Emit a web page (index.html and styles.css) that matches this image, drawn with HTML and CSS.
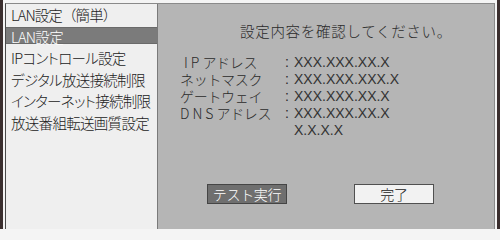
FILE: index.html
```html
<!DOCTYPE html>
<html lang="ja">
<head>
<meta charset="utf-8">
<title>LAN設定</title>
<link rel="stylesheet" href="styles.css">
</head>
<body>
<div class="frame">
  <div class="screen">
    <ul class="sidebar">
      <li class="item item-title">LAN設定（簡単）</li>
      <li class="item item-active">LAN設定</li>
      <li class="item item-first">IPコントロール設定</li>
      <li class="item">デジタル放送接続制限</li>
      <li class="item">インターネット接続制限</li>
      <li class="item">放送番組転送画質設定</li>
    </ul>
    <div class="main">
      <p class="heading">設定内容を確認してください。</p>
      <div class="info">
        <div class="label label-ip"><span class="latin">IP</span>アドレス</div><div class="colon">:</div><div class="value">XXX.XXX.XX.X</div>
        <div class="label">ネットマスク</div><div class="colon">:</div><div class="value">XXX.XXX.XXX.X</div>
        <div class="label">ゲートウェイ</div><div class="colon">:</div><div class="value">XXX.XXX.XX.X</div>
        <div class="label"><span class="latin">DNS</span>アドレス</div><div class="colon">:</div><div class="value">XXX.XXX.XX.X</div>
        <div class="label"></div><div class="colon"></div><div class="value">X.X.X.X</div>
      </div>
      <div class="actions">
        <button class="btn btn-test">テスト実行</button>
        <button class="btn btn-done">完了</button>
      </div>
    </div>
  </div>
</div>
</body>
</html>
```

FILE: styles.css
```css
* { box-sizing: border-box; }

html, body {
  margin: 0;
  padding: 0;
  background: #f4f4f4;
}

body {
  width: 500px;
  height: 229px;
  overflow: hidden;
  font-family: "Noto Sans CJK JP", "Noto Sans", sans-serif;
  color: #2a2a2a;
}

.frame {
  display: flex;
  height: 229px;
  padding: 3px 2px 0 2px;
  border-left: 3px solid #3b2f2f;
  border-right: 3px solid #3b2f2f;
  background: #f4f4f4;
}

.screen {
  flex: 1;
  display: flex;
  border-left: 1px solid #4a4a4a;
  border-top: 1px solid #8a8a8a;
  border-right: 1px solid #8a8a8a;
}

.sidebar {
  list-style: none;
  margin: 0;
  padding: 0;
  width: 152px;
  flex: none;
  background: #efefef;
  border-right: 1px solid #7a7a7a;
}

.item {
  height: 21.5px;
  line-height: 21.5px;
  padding-left: 5px;
  font-size: 14.5px;
  font-weight: 300;
  letter-spacing: -0.7px;
  font-feature-settings: "palt";
  white-space: nowrap;
  color: #222222;
}

.item-title {
  height: 22px;
  line-height: 22px;
  font-feature-settings: normal;
  letter-spacing: -0.9px;
}

.item-active {
  height: 17px;
  line-height: 17px;
  margin-top: 1px;
  background: #7b7b7b;
  color: #ffffff;
  border-top: 1px solid #6a6a6a;
  border-bottom: 1px solid #6a6a6a;
}

.item-first {
  margin-top: 3px;
}

.main {
  flex: 1;
  background: #b5b5b5;
  padding-top: 17px;
}

.heading {
  margin: 0 0 13px 82px;
  height: 20px;
  line-height: 20px;
  font-size: 14.5px;
  font-weight: 300;
  letter-spacing: 0.7px;
  white-space: nowrap;
}

.info {
  display: grid;
  grid-template-columns: 105px 9px auto;
  grid-auto-rows: 17px;
  margin-left: 22px;
  font-size: 14px;
  font-weight: 300;
}

.label,
.colon,
.value {
  height: 17px;
  line-height: 17px;
  white-space: nowrap;
}

.label {
  letter-spacing: -0.3px;
}

.label-ip {
  padding-left: 4px;
}

.latin {
  letter-spacing: 3px;
}

.colon {
  font-family: "Liberation Sans", sans-serif;
}

.value {
  font-family: "Liberation Sans", sans-serif;
  color: #333333;
}

.actions {
  display: flex;
  gap: 67px;
  margin: 45px 0 0 49px;
}

.btn {
  width: 80px;
  height: 20px;
  padding: 0;
  font-family: "Noto Sans CJK JP", "Noto Sans", sans-serif;
  font-size: 14px;
  font-weight: 300;
  line-height: 18px;
  letter-spacing: -0.3px;
}

.btn-test {
  background: #6f6f6f;
  color: #ffffff;
  border: 1px solid #454545;
}

.btn-done {
  background: #f2f2f2;
  color: #222222;
  border: 1px solid #505050;
}
```
